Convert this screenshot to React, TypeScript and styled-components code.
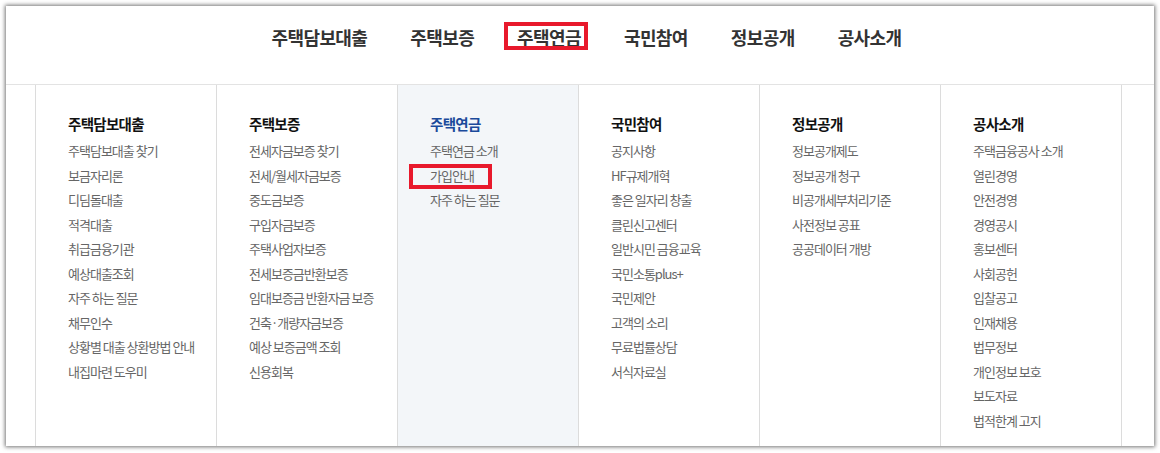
import React from "react";
import styled, { createGlobalStyle } from "styled-components";

const Global = createGlobalStyle`
  html, body { margin: 0; padding: 0; background: #ffffff; }
  body { font-family: "Noto Sans CJK KR", "Noto Sans", sans-serif; }
  * { box-sizing: border-box; }
`;

const Frame = styled.div`
  margin: 6px;
  width: 1148px;
  height: 440px;
  background: #fff;
  box-shadow: 0 0 4px 1px rgba(0, 0, 0, 0.55);
  display: flex;
  flex-direction: column;
  overflow: hidden;
`;

const Header = styled.header`
  height: 79px;
  border-bottom: 1px solid #e3e3e3;
  display: flex;
  justify-content: center;
  align-items: flex-start;
  padding: 19px 0 0 13px;
  gap: 43px;
`;

const NavItem = styled.span`
  position: relative;
  font-size: 18px;
  font-weight: 700;
  color: #333;
  letter-spacing: -0.6px;
  line-height: 24px;
`;

const Highlight = styled.span<{ $t: number; $r: number; $b: number; $l: number }>`
  position: absolute;
  top: ${(p) => p.$t}px;
  right: ${(p) => p.$r}px;
  bottom: ${(p) => p.$b}px;
  left: ${(p) => p.$l}px;
  border: 4px solid #e8192c;
  pointer-events: none;
`;

const Body = styled.div`
  flex: 1;
  display: flex;
  padding-left: 29px;
`;

const Column = styled.section<{ $active?: boolean; $last?: boolean }>`
  width: ${(p) => (p.$last ? 182 : 181)}px;
  border-left: 1px solid #dcdcdc;
  border-right: ${(p) => (p.$last ? "1px solid #dcdcdc" : "none")};
  background: ${(p) => (p.$active ? "#f3f6f9" : "transparent")};
  padding: 29px 0 0 32px;
`;

const Heading = styled.h3<{ $active?: boolean }>`
  margin: 0 0 5px;
  font-size: 14.5px;
  font-weight: 700;
  line-height: 20px;
  letter-spacing: -0.7px;
  color: ${(p) => (p.$active ? "#1b4a9b" : "#111")};
`;

const List = styled.ul`
  list-style: none;
  margin: 0;
  padding: 0;
`;

const Item = styled.li`
  font-size: 13px;
  line-height: 24.5px;
  height: 24.5px;
  color: #666;
  letter-spacing: -1px;
  white-space: nowrap;
`;

const ItemText = styled.span`
  position: relative;
  display: inline-block;
`;

type Col = { title: string; items: string[] };

const cols: Col[] = [
  {
    title: "주택담보대출",
    items: [
      "주택담보대출 찾기",
      "보금자리론",
      "디딤돌대출",
      "적격대출",
      "취급금융기관",
      "예상대출조회",
      "자주 하는 질문",
      "채무인수",
      "상황별 대출 상환방법 안내",
      "내집마련 도우미",
    ],
  },
  {
    title: "주택보증",
    items: [
      "전세자금보증 찾기",
      "전세/월세자금보증",
      "중도금보증",
      "구입자금보증",
      "주택사업자보증",
      "전세보증금반환보증",
      "임대보증금 반환자금 보증",
      "건축·개량자금보증",
      "예상 보증금액 조회",
      "신용회복",
    ],
  },
  {
    title: "주택연금",
    items: ["주택연금 소개", "가입안내", "자주 하는 질문"],
  },
  {
    title: "국민참여",
    items: [
      "공지사항",
      "HF규제개혁",
      "좋은 일자리 창출",
      "클린신고센터",
      "일반시민 금융교육",
      "국민소통plus+",
      "국민제안",
      "고객의 소리",
      "무료법률상담",
      "서식자료실",
    ],
  },
  {
    title: "정보공개",
    items: ["정보공개제도", "정보공개 청구", "비공개세부처리기준", "사전정보 공표", "공공데이터 개방"],
  },
  {
    title: "공사소개",
    items: [
      "주택금융공사 소개",
      "열린경영",
      "안전경영",
      "경영공시",
      "홍보센터",
      "사회공헌",
      "입찰공고",
      "인재채용",
      "법무정보",
      "개인정보 보호",
      "보도자료",
      "법적한계 고지",
    ],
  },
];

const navs = ["주택담보대출", "주택보증", "주택연금", "국민참여", "정보공개", "공사소개"];

export default function App() {
  return (
    <>
      <Global />
      <Frame>
        <Header>
          {navs.map((n) => (
            <NavItem key={n}>
              {n}
              {n === "주택연금" && <Highlight $t={-3} $r={-7} $b={-1} $l={-13} />}
            </NavItem>
          ))}
        </Header>
        <Body>
          {cols.map((c, i) => (
            <Column key={c.title} $active={i === 2} $last={i === cols.length - 1}>
              <Heading $active={i === 2}>{c.title}</Heading>
              <List>
                {c.items.map((it) => (
                  <Item key={it}>
                    <ItemText>
                      {it}
                      {it === "가입안내" && <Highlight $t={0} $r={-18} $b={-1} $l={-21} />}
                    </ItemText>
                  </Item>
                ))}
              </List>
            </Column>
          ))}
        </Body>
      </Frame>
    </>
  );
}
